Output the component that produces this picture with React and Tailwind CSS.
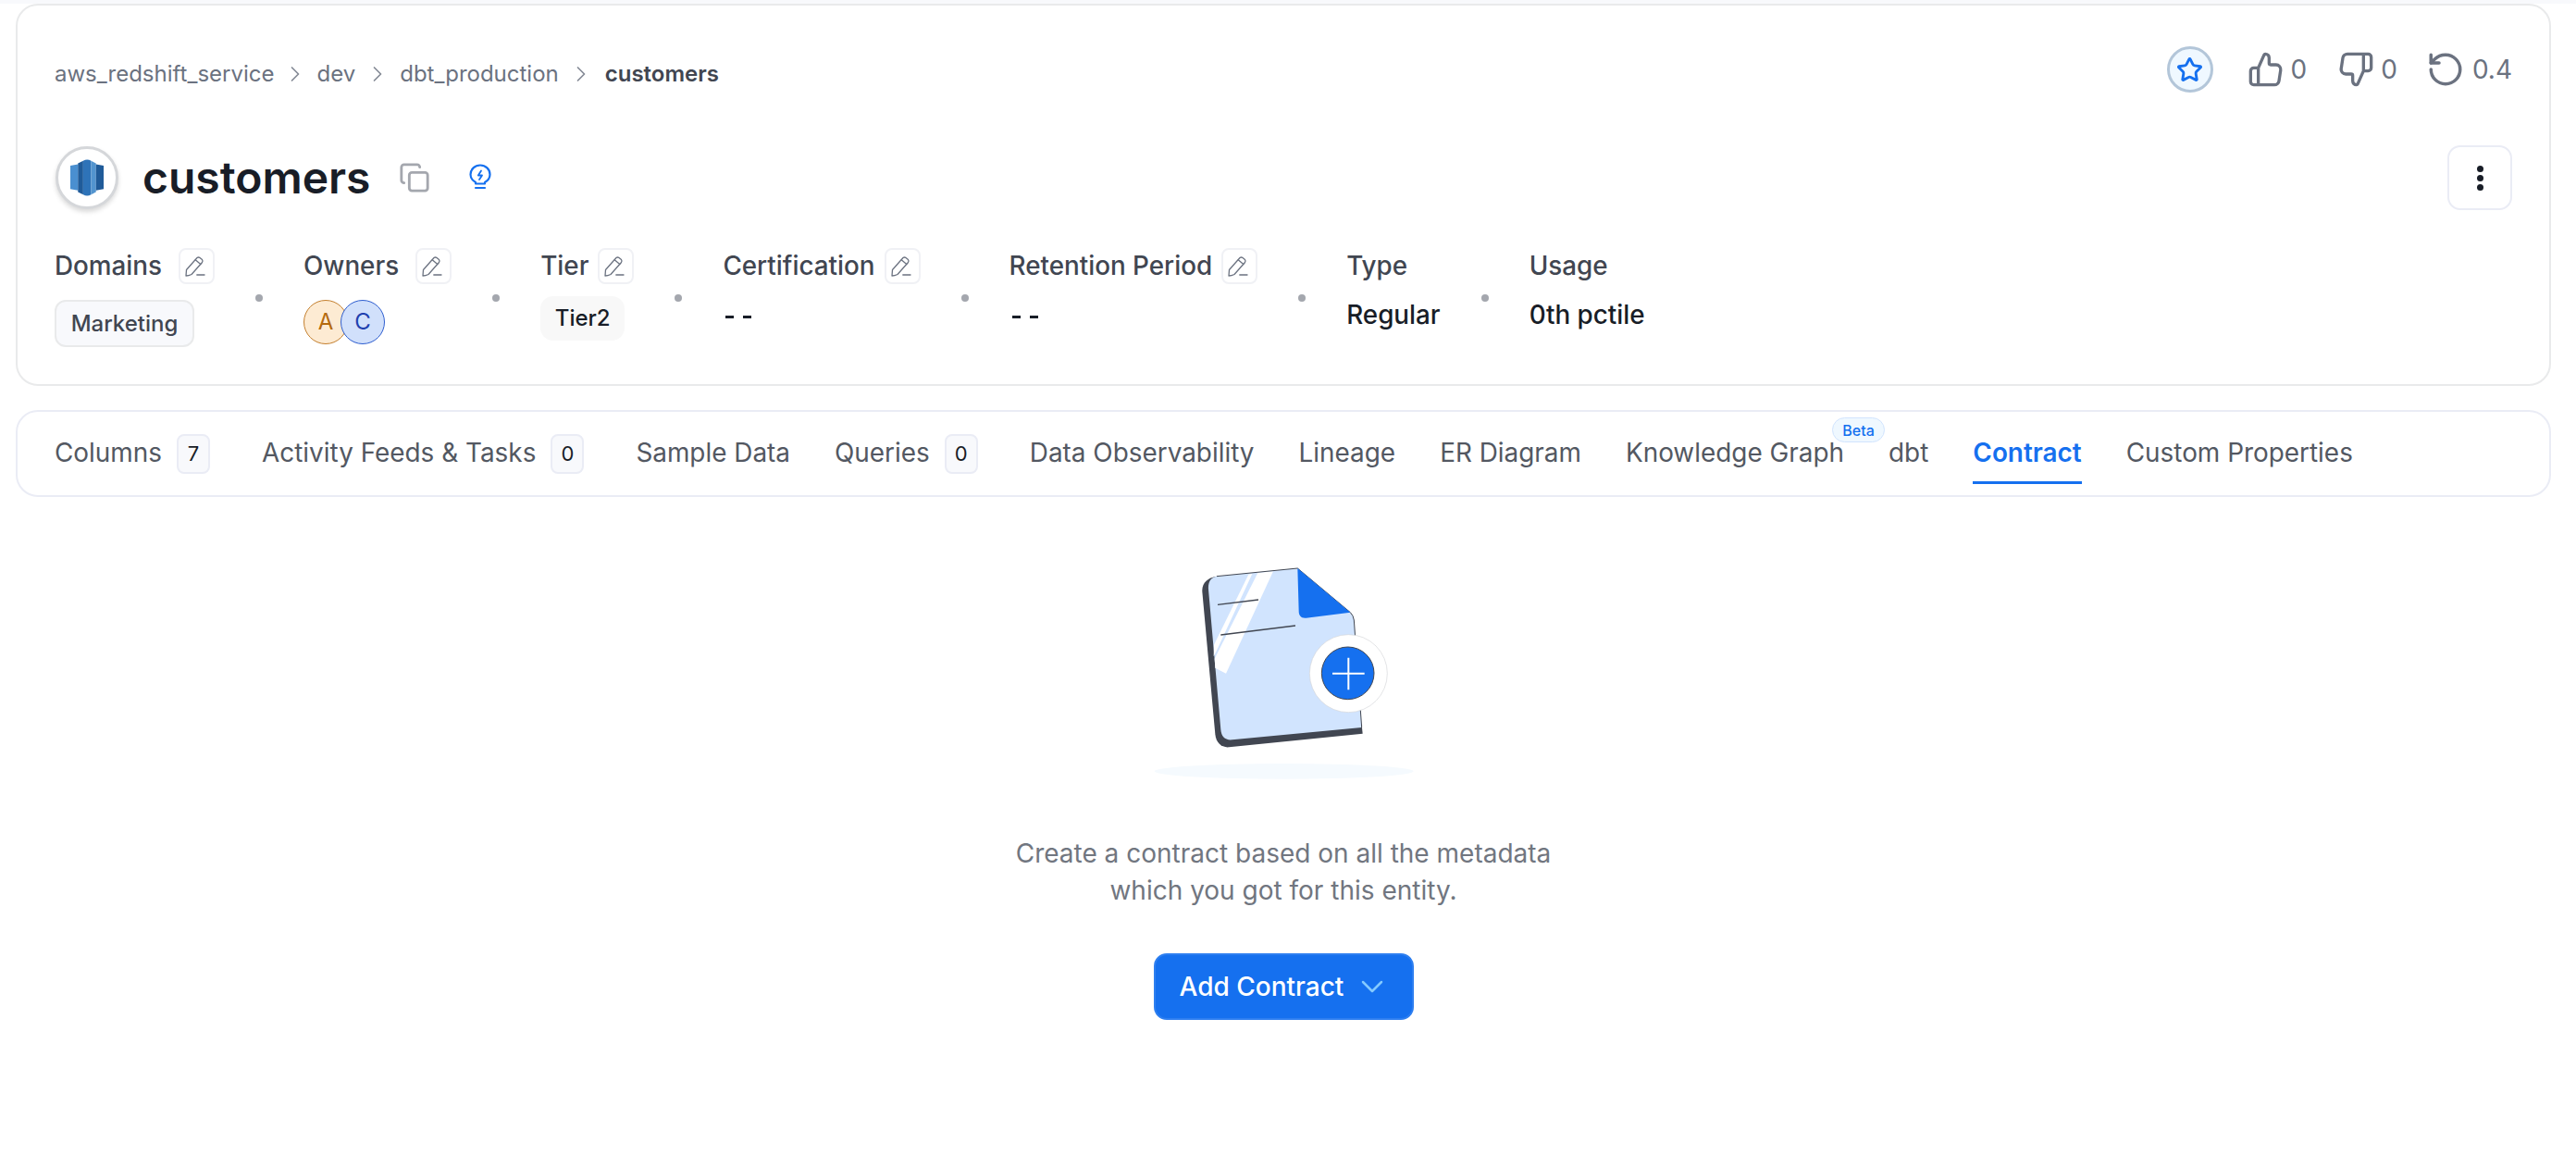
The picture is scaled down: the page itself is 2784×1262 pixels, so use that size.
import React from 'react';
import { ChevronRight, ChevronDown, Copy, Star, RotateCcw } from 'lucide-react';

const tabs = [
  { name: 'Columns', count: 7 },
  { name: 'Activity Feeds & Tasks', count: 0 },
  { name: 'Sample Data' },
  { name: 'Queries', count: 0 },
  { name: 'Data Observability' },
  { name: 'Lineage' },
  { name: 'ER Diagram' },
  { name: 'Knowledge Graph', beta: true },
  { name: 'dbt' },
  { name: 'Contract', active: true },
  { name: 'Custom Properties' },
];

const ThumbIcon = ({ className }) => (
  <svg className={className} viewBox="0 0 24 24" fill="none" stroke="currentColor" strokeWidth="2" strokeLinecap="round" strokeLinejoin="round">
    <path d="M7 22V11M2 13V20C2 21.1046 2.89543 22 4 22H17.4262C18.907 22 20.1662 20.9197 20.3914 19.4562L21.4683 12.4562C21.7479 10.6389 20.3418 9 18.5032 9H15C14.4477 9 14 8.55228 14 8V4.46584C14 3.10399 12.896 2 11.5342 2C11.2093 2 10.915 2.1913 10.7831 2.48812L7.26394 10.4061C7.10344 10.7673 6.74532 11 6.35013 11H4C2.89543 11 2 11.8954 2 13Z" />
  </svg>
);

const EditButton = () => (
  <button className="flex h-[39px] w-[39px] items-center justify-center rounded-[8px] border-2 border-[#f0f1f5] bg-white">
    <svg className="h-[35px] w-[35px]" viewBox="2 2 35 35" fill="none" stroke="#6b7280" strokeWidth="1.3" strokeLinecap="round" strokeLinejoin="round">
      <path d="M8 30 8.5 23.5 20 10.5Q21.5 9.5 23 10.5L25.5 12.5Q26.5 14 25.5 15.5L14 28.5Q11 30 8 30Z" />
      <path d="M18.2 12.8 23.8 17.6M19.8 29H28" />
    </svg>
  </button>
);

const Dot = () => <span className="h-[8px] w-[8px] self-center rounded-full bg-[#a4a7ae]" />;

const MetaLabel = ({ children, edit, wide }) => (
  <div className={wide ? 'flex h-[39px] items-center gap-[18px] text-[27.8px] font-medium text-[#414651]' : 'flex h-[39px] items-center gap-[10px] text-[27.8px] font-medium text-[#414651]'}>
    <span>{children}</span>
    {edit && <EditButton />}
  </div>
);

const Dashes = () => (
  <div className="mt-[18px] flex gap-[10px] pl-[3px] pt-[16px]">
    <span className="h-[3px] w-[9px] bg-[#181d27]" />
    <span className="h-[3px] w-[9px] bg-[#181d27]" />
  </div>
);

const RedshiftLogo = () => (
  <svg className="h-[40px] w-[36px]" viewBox="228 125 109 120">
    <path d="M228 146 253 141V227L228 222Z" fill="#4a8fd0" />
    <path d="M253 138 270 130V240L253 232Z" fill="#205b99" />
    <path d="M270 130Q283 122 296 130V240Q283 248 270 240Z" fill="#2e73b8" />
    <path d="M296 130 312 138V232L296 240Z" fill="#5294cf" />
    <path d="M312 141 337 146V222L312 227Z" fill="#205b99" />
  </svg>
);

const ContractArt = () => (
  <svg className="mr-[14px] h-[280px] w-[360px]" viewBox="0 0 1080 840">
    <ellipse cx="563" cy="760" rx="420" ry="25" fill="#f5fafe" />
    <path d="M345 128C315 132 296 150 298 178L340 640C343 668 360 684 385 682L818 638 815 610Z" fill="#414651" />
    <path d="M345 128 607 102 778 245Q788 255 790 270L815 618 395 658C372 660 360 648 358 625L318 170C316 145 328 130 345 128Z" fill="#d1e4fe" />
    <path d="M448 122 460 120 345 368 335 388 336 350Z" fill="#fff" />
    <path d="M478 117 528 112 375 443 340 425 338 395Z" fill="#fff" />
    <path d="M345 128 607 102 778 245Q788 255 790 270L815 618" fill="none" stroke="#414651" strokeWidth="3" />
    <path d="M607 102 778 245 635 263C618 265 611 255 611 240Z" fill="#1570ef" />
    <path d="M348 220 480 204M358 318 600 288" stroke="#414651" strokeWidth="4" />
    <circle cx="772" cy="443" r="126" fill="#fff" stroke="#d5d7da" strokeWidth="2" />
    <circle cx="770" cy="442" r="85" fill="#1570ef" stroke="#414651" strokeWidth="3" />
    <path d="M720 443H824M772 392V496" stroke="#fff" strokeWidth="6" />
  </svg>
);

export default function App() {
  return (
    <div className="min-h-screen bg-white font-['Inter',sans-serif]">
      <div className="h-[4px] bg-[#f8f9fc]" />

      <div className="ml-[17px] mr-[27px]">
        {/* Header card */}
        <div className="h-[413px] rounded-[24px] border-2 border-[#e9eaeb] px-[40px] pt-[44px]">
          <div className="flex h-[50px] items-center justify-between">
            <div className="flex items-center pt-[10px] text-[24px] text-[#6b7280]">
              <span>aws_redshift_service</span>
              <ChevronRight className="mx-[9px] h-[28px] w-[28px] text-[#858b96]" strokeWidth={1.5} />
              <span>dev</span>
              <ChevronRight className="mx-[10px] h-[28px] w-[28px] text-[#858b96]" strokeWidth={1.5} />
              <span>dbt_production</span>
              <ChevronRight className="ml-[10px] mr-[12px] h-[28px] w-[28px] text-[#858b96]" strokeWidth={1.5} />
              <span className="font-semibold text-[#414651]">customers</span>
            </div>
            <div className="flex items-center text-[28px] text-[#6b7280]">
              <div className="mr-[37px] flex h-[50px] w-[50px] items-center justify-center rounded-full border-[3px] border-[#b3c6d9] bg-[#eff8ff]">
                <Star className="h-[29px] w-[29px] text-[#1570ef]" strokeWidth={2.4} />
              </div>
              <ThumbIcon className="h-[40px] w-[40px]" />
              <span className="ml-[7px]">0</span>
              <ThumbIcon className="ml-[33px] h-[40px] w-[40px] rotate-180" />
              <span className="ml-[7px]">0</span>
              <RotateCcw className="ml-[31px] h-[42px] w-[42px]" strokeWidth={2} />
              <span className="ml-[8px]">0.4</span>
            </div>
          </div>

          <div className="mt-[57px] flex h-[70px] items-center justify-between">
            <div className="flex items-center">
              <div className="ml-[1px] flex h-[68px] w-[68px] items-center justify-center rounded-full border-[3px] border-[#d5d7da] bg-white shadow-[0_3px_5px_rgba(0,0,0,0.15)]">
                <RedshiftLogo />
              </div>
              <span className="ml-[26px] text-[48px] font-semibold text-[#181d27]">customers</span>
              <Copy className="ml-[31px] h-[34px] w-[34px] text-[#a4a7ae]" strokeWidth={2} />
              <svg className="ml-[42px] h-[30px] w-[24px]" viewBox="0 0 24 30" fill="none" stroke="#1570ef" strokeWidth="2.2" strokeLinecap="round" strokeLinejoin="round">
                <path d="M7 21.5V20C3.5 18 1.5 15 1.5 11.5 1.5 5.8 6.2 1.5 12 1.5S22.5 5.8 22.5 11.5C22.5 15 20.5 18 17 20V21.5H7Z" />
                <path d="M7 26H17" />
                <path d="M13 7.5 9.8 12.5H14L11 17" strokeWidth="1.8" />
              </svg>
            </div>
            <button className="flex h-[70px] w-[70px] items-center justify-center rounded-[14px] border-2 border-[#eaecf5] bg-white">
              <span className="flex flex-col gap-[3px]">
                <span className="h-[7px] w-[7px] rounded-full bg-[#181d27]" />
                <span className="h-[7px] w-[7px] rounded-full bg-[#181d27]" />
                <span className="h-[7px] w-[7px] rounded-full bg-[#181d27]" />
              </span>
            </button>
          </div>

          <div className="mt-[41px] flex gap-[44px]">
            <div>
              <MetaLabel edit wide>Domains</MetaLabel>
              <div className="mt-[17px] flex h-[51px] w-[151px] items-center justify-center rounded-[12px] border-2 border-[#e9eaeb] bg-[#f8f9fc] text-[24px] font-medium text-[#414651]">
                Marketing
              </div>
            </div>
            <Dot />
            <div>
              <MetaLabel edit wide>Owners</MetaLabel>
              <div className="mt-[17px] flex">
                <span className="flex h-[48px] w-[48px] items-center justify-center rounded-full border border-[#c4802f] bg-[#fdebd3] text-[24px] text-[#b4690e]">A</span>
                <span className="-ml-[8px] flex h-[48px] w-[48px] items-center justify-center rounded-full border border-[#2f5fd0] bg-[#d1e0fb] text-[24px] text-[#1e40af]">C</span>
              </div>
            </div>
            <Dot />
            <div>
              <MetaLabel edit>Tier</MetaLabel>
              <div className="mt-[13px] flex h-[48px] w-[91px] items-center justify-center rounded-[14px] bg-[#f8f8f8] text-[24px] font-medium text-[#181d27]">
                Tier2
              </div>
            </div>
            <Dot />
            <div>
              <MetaLabel edit>Certification</MetaLabel>
              <Dashes />
            </div>
            <Dot />
            <div>
              <MetaLabel edit>Retention Period</MetaLabel>
              <Dashes />
            </div>
            <Dot />
            <div>
              <MetaLabel>Type</MetaLabel>
              <div className="mt-[13px] text-[27.8px] font-medium text-[#181d27]">Regular</div>
            </div>
            <Dot />
            <div>
              <MetaLabel>Usage</MetaLabel>
              <div className="mt-[13px] text-[27.8px] font-medium text-[#181d27]">0th pctile</div>
            </div>
          </div>
        </div>

        {/* Tabs */}
        <div className="mt-[26px] flex h-[94px] items-center gap-[48px] rounded-[24px] border-2 border-[#eaecf5] px-[40px] text-[27.9px] text-[#535862]">
          {tabs.map((tab) => (
            <div
              key={tab.name}
              className={
                tab.active
                  ? 'relative flex h-full items-center font-semibold text-[#1570ef]'
                  : 'relative flex h-full items-center'
              }
            >
              <span>{tab.name}</span>
              {tab.count !== undefined && (
                <span className="ml-[16px] mr-[8px] flex h-[43px] w-[36px] items-center justify-center rounded-[8px] border-2 border-[#eaecf5] bg-[#f8f9fc] text-[22px] text-[#181d27]">
                  {tab.count}
                </span>
              )}
              {tab.beta && (
                <span className="absolute right-[-44px] top-[6px] flex h-[27px] w-[57px] items-center justify-center rounded-full border border-[#d1e4fe] bg-[#eff8ff] text-[16px] font-medium text-[#1570ef]">
                  Beta
                </span>
              )}
              {tab.active && <span className="absolute bottom-[12px] left-0 right-0 h-[3px] bg-[#1570ef]" />}
            </div>
          ))}
        </div>

        {/* Empty state */}
        <div className="mt-[43px] flex flex-col items-center">
          <ContractArt />
          <p className="mt-[42px] text-center text-[28px] leading-[40px] text-[#717680]">
            Create a contract based on all the metadata
            <br />
            which you got for this entity.
          </p>
          <button className="mt-[48px] flex h-[72px] w-[281px] items-center gap-[11px] rounded-[14px] border-2 border-[#2e7ff0] bg-[#1570ef] pl-[26px] text-[28px] font-medium text-white">
            Add Contract
            <ChevronDown className="h-[40px] w-[40px] text-[#84caff]" strokeWidth={1.5} />
          </button>
        </div>
      </div>
    </div>
  );
}
